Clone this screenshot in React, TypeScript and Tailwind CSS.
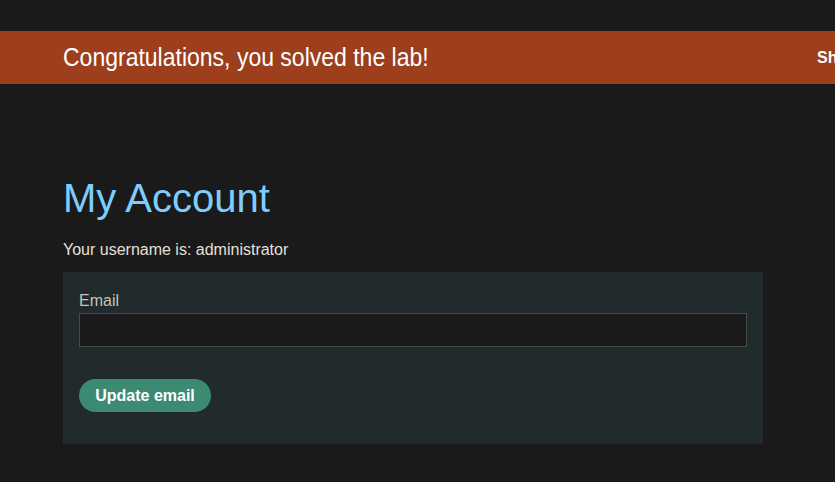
import React from 'react';

const App: React.FC = () => {
  return (
    <div className="min-h-[482px] w-full overflow-hidden bg-[#1a1a1a] font-['Liberation_Sans',Arial,sans-serif]">
      <div className="h-[31px]" />
      <div className="flex h-[53px] items-center justify-between bg-[#9d3e1d] pl-[63px]">
        <h4 className="origin-left scale-x-[0.92] whitespace-nowrap text-[25px] text-white">
          Congratulations, you solved the lab!
        </h4>
        <span className="w-[18px] overflow-hidden whitespace-nowrap text-base font-bold text-white">
          Share your skills!
        </span>
      </div>
      <div className="px-[63px] pt-[90px]">
        <h1 className="text-[40px] leading-[48px] text-[#7fcdff]">My Account</h1>
        <p className="mt-[18px] text-base leading-[20px] text-[#e4e0d8]">Your username is: administrator</p>
        <form className="mt-[12px] flex w-[700px] flex-col bg-[#212a2c] px-[16px] pt-[18px] pb-[32px]">
          <label className="text-base leading-[22px] text-[#c8c2ba]">Email</label>
          <input
            type="email"
            className="mt-[1px] h-[34px] w-full border border-[#4a4b46] bg-[#1a1a1a] px-2 text-white outline-none"
          />
          <button
            type="button"
            className="mt-[32px] h-[33px] w-[132px] rounded-full bg-[#3d8a73] text-base font-bold text-white"
          >
            Update email
          </button>
        </form>
      </div>
    </div>
  );
};

export default App;
